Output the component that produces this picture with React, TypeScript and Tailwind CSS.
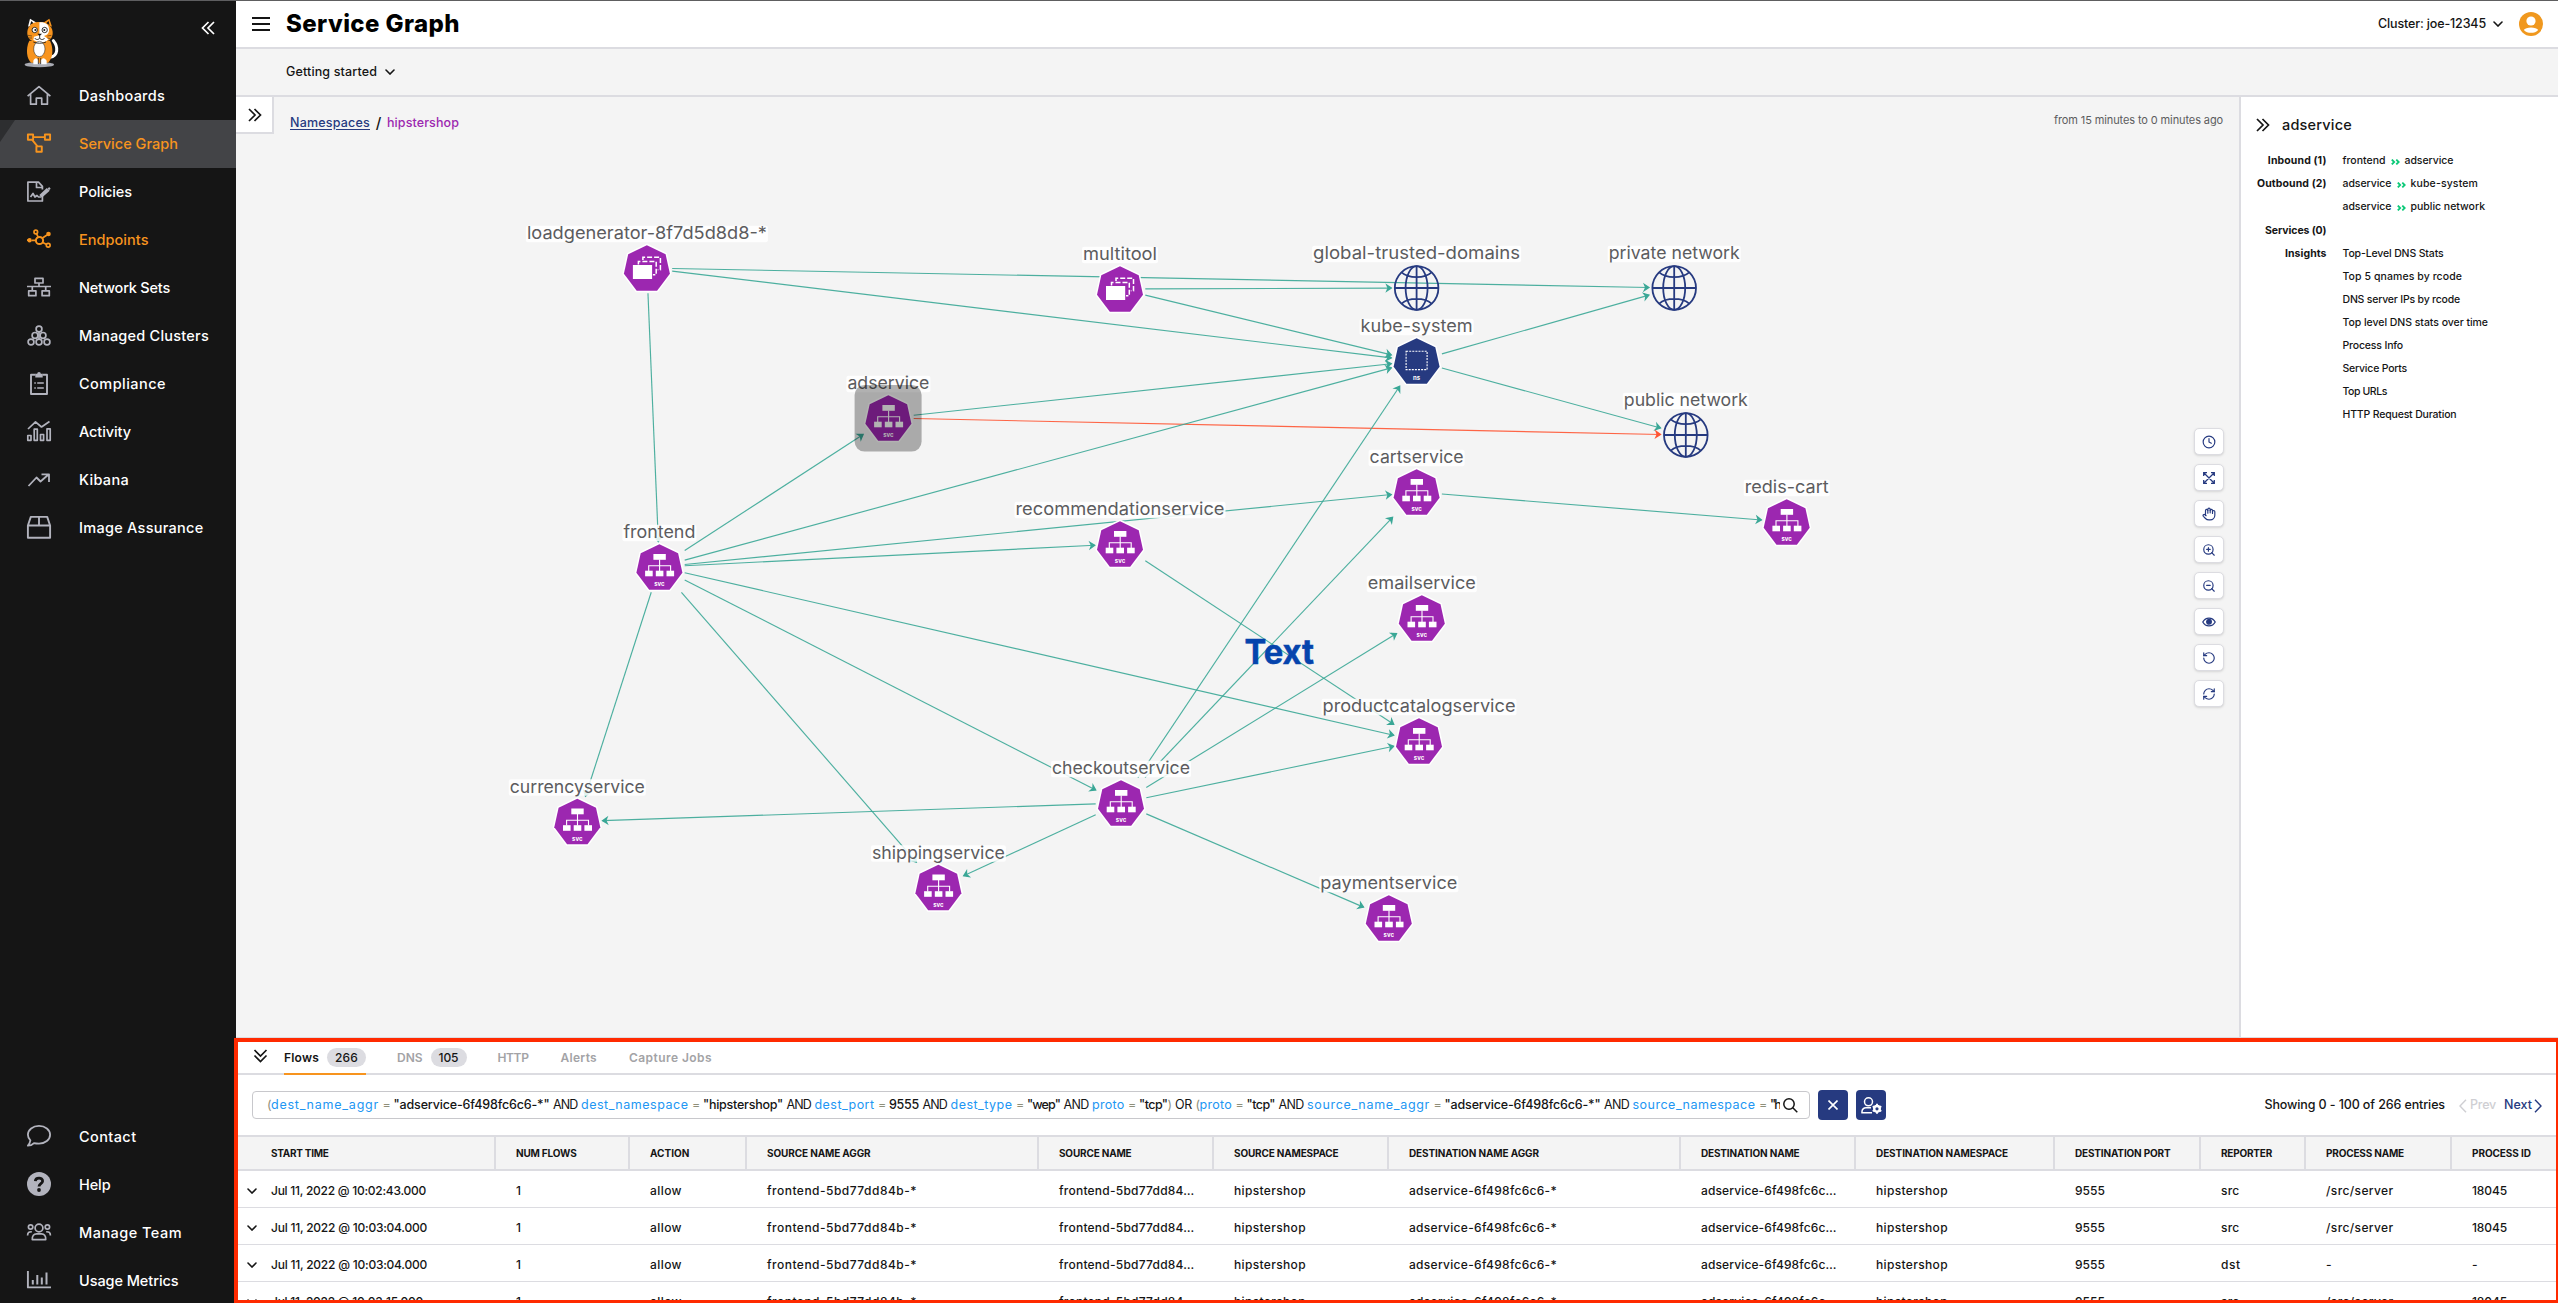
import { useLayoutEffect, useRef } from "react";
import type { ReactNode } from "react";
import {
  LuClock,
  LuHand,
  LuZoomIn,
  LuZoomOut,
  LuRotateCcw,
  LuRefreshCw,
} from "react-icons/lu";

/* Text that is tracked out (or in) so that it fills a given width. */
function Fit({ w, className = "", children }: { w: number; className?: string; children: string }) {
  const ref = useRef<HTMLSpanElement>(null);
  useLayoutEffect(() => {
    const el = ref.current;
    if (!el) return;
    el.style.letterSpacing = "0px";
    const natural = el.getBoundingClientRect().width;
    el.style.letterSpacing = `${(w - natural) / children.length}px`;
  }, [w, children]);
  return (
    <span ref={ref} className={`inline-block whitespace-pre ${className}`}>
      {children}
    </span>
  );
}

/* ---------- icons ---------- */

function Icon({ children, className = "" }: { children: ReactNode; className?: string }) {
  return (
    <svg
      viewBox="0 0 24 24"
      className={`h-6 w-6 shrink-0 overflow-visible ${className}`}
      fill="none"
      stroke="currentColor"
      strokeWidth="1.7"
      strokeLinejoin="round"
    >
      {children}
    </svg>
  );
}

function DoubleChevron({ className = "" }: { className?: string }) {
  return (
    <svg viewBox="0 0 14 14" className={`h-[14px] w-[14px] ${className}`} fill="none" stroke="currentColor" strokeWidth="1.7">
      <path d="M1 1L7 7L1 13M6.5 1L12.5 7L6.5 13" />
    </svg>
  );
}

function Chevron({ className = "" }: { className?: string }) {
  return (
    <svg viewBox="0 0 10 6" className={`h-[6px] w-[10px] ${className}`} fill="none" stroke="currentColor" strokeWidth="1.6" strokeLinecap="round">
      <path d="M1 1L5 5L9 1" />
    </svg>
  );
}

function CatLogo() {
  return (
    <svg viewBox="0 0 180 186" className="h-[62px] w-[60px]">
      <ellipse cx="64" cy="164" rx="44" ry="8" fill="#a9abb3" />
      <path d="M96 142C120 138 122 112 106 92" fill="none" stroke="#fff" strokeWidth="9" strokeLinecap="round" />
      <path d="M30 50L36 26L56 38Z" fill="#fff" />
      <path d="M76 38L94 26L102 50Z" fill="#f7941e" />
      <path d="M84 40L92 33L95 48Z" fill="#151515" />
      <path d="M36 45L40 33L48 41Z" fill="#151515" />
      <path d="M34 92C22 116 26 148 40 158H90C104 146 108 116 96 92Z" fill="#f7941e" />
      <path d="M64 36C40 34 26 52 28 72C30 90 46 98 66 98Z" fill="#f7941e" />
      <path d="M64 36C90 34 106 52 104 72C102 90 86 98 64 98Z" fill="#f7941e" />
      <path d="M64 37C80 35 92 42 93 56C94 70 88 74 78 78L92 88C84 97 74 98 64 98L46 90L48 80L64 76Z" fill="#fff" />
      <ellipse cx="64" cy="117" rx="17" ry="23" fill="#fff" stroke="#151515" strokeWidth="1.5" />
      <path d="M46 152C50 142 58 142 61 152L60 163H46ZM68 152C72 142 80 142 86 152L86 163H69Z" fill="#fff" />
      <path d="M61 144V162M68 144V162" stroke="#151515" strokeWidth="2" />
      <circle cx="50" cy="60" r="8" fill="#fff" stroke="#151515" strokeWidth="2.5" />
      <circle cx="80" cy="60" r="8" fill="#fff" stroke="#151515" strokeWidth="2.5" />
      <circle cx="52" cy="60" r="3" fill="#151515" />
      <circle cx="79" cy="60" r="3" fill="#151515" />
      <path d="M58 71H72L65 78Z" fill="#151515" />
      <path d="M65 76V84M50 84C54 90 62 90 65 84C68 90 76 90 80 84M46 96C56 101 74 101 84 96" fill="none" stroke="#151515" strokeWidth="2.5" />
      <path d="M30 76L42 78M32 84L42 84M88 78L100 76M88 84L98 86" stroke="#151515" strokeWidth="1.5" />
    </svg>
  );
}

const icons: Record<string, ReactNode> = {
  Dashboards: (
    <Icon>
      <path d="M0.6 12.2L12 2.6L23.4 12.2M3.6 10.2V20.2H9.3V14.2H14.7V20.2H20.4V10.2" />
    </Icon>
  ),
  "Service Graph": (
    <Icon className="text-[#f7941e]">
      <path d="M0.9 2.5H6.1V7.7H0.9ZM17.9 2.5H23.1V7.7H17.9ZM9.4 14.4H14.8V19.8H9.4ZM6.1 5.1H17.9M5 7.7L10.5 14.4" strokeWidth="1.9" />
    </Icon>
  ),
  Policies: (
    <Icon>
      <path d="M15.4 16V21H0.9V2.2H11.5L15.4 6.4V9.5M9.5 2.5V7.5H15M3.5 17L6 13.5L8 17L10 15.5L11.5 17H14" />
      <path d="M13 15.8L20.5 8.6M21.4 7.8L23 9.4M14.2 17L22 10" strokeWidth="2" />
    </Icon>
  ),
  Endpoints: (
    <Icon className="text-[#f7941e]">
      <circle cx="12.5" cy="12.5" r="3.6" strokeWidth="2" />
      <circle cx="8.8" cy="4" r="1.8" />
      <circle cx="21.2" cy="17.2" r="1.9" />
      <circle cx="2.6" cy="12.2" r="2.2" fill="currentColor" stroke="none" />
      <circle cx="21.5" cy="6" r="2.3" fill="currentColor" stroke="none" />
      <path d="M9.5 5.6L11.2 9.2M5 12.3H9M15.5 10L20 7M15.8 14.5L19.6 16.5M2 12.2H0" />
    </Icon>
  ),
  "Network Sets": (
    <Icon>
      <path d="M8 2.4H16V7H8ZM12 7V10.5M0 10.5H24M5.3 10.5V14.8M18.7 10.5V14.8M1.7 14.8H8.9V19.7H1.7ZM15.1 14.8H22.3V19.7H15.1Z" />
    </Icon>
  ),
  "Managed Clusters": (
    <Icon>
      <circle cx="12" cy="5" r="2.9" />
      <circle cx="8" cy="11.4" r="2.9" />
      <circle cx="16" cy="11.4" r="2.9" />
      <circle cx="4" cy="18" r="2.9" />
      <circle cx="12" cy="18" r="2.9" />
      <circle cx="20" cy="18" r="2.9" />
      <path d="M12 8V15" />
    </Icon>
  ),
  Compliance: (
    <Icon>
      <path d="M8.5 2.8H4V22H20V2.8H15.5" strokeWidth="1.9" />
      <path d="M8.3 1.8H10.2A1.8 1.8 0 0 1 13.8 1.8H15.7V5.6H8.3Z" fill="currentColor" stroke="none" />
      <path d="M7.3 11H8.8M10.2 11H16.8M7.3 16H8.8M10.2 16H16.8" strokeWidth="1.4" />
    </Icon>
  ),
  Activity: (
    <Icon>
      <path d="M1 9L8.5 1.8L14.5 7L22.5 1.5M0.8 15.5H4V20.3H0.8ZM7.2 9.2H10.3V20.3H7.2ZM13.5 14.5H16.6V20.3H13.5ZM20 8.8H23.2V20.3H20Z" />
    </Icon>
  ),
  Kibana: (
    <Icon>
      <path d="M1.5 18L9.5 9.5L13.5 13.5L21.5 6.5M14.5 6.3H22V14" strokeWidth="1.8" />
    </Icon>
  ),
  "Image Assurance": (
    <Icon>
      <path d="M0.9 9.5L3.8 0.9H20.2L23.1 9.5V21.8H0.9ZM0.9 9.5H23.1M12 0.9V9.5" strokeWidth="1.9" />
    </Icon>
  ),
  Contact: (
    <Icon>
      <path d="M12 0.9C5.8 0.9 0.9 4.8 0.9 9.7C0.9 11.9 1.9 13.9 3.4 15.4C3.1 17.3 2.2 19.2 0.9 20.7C3.2 20.7 5.4 19.8 7 18.1C8.6 18.5 10.2 18.6 12 18.6C18.2 18.6 23.1 14.6 23.1 9.7C23.1 4.8 18.2 0.9 12 0.9Z" strokeWidth="1.8" />
    </Icon>
  ),
  Help: (
    <Icon>
      <circle cx="12" cy="11" r="12" fill="currentColor" stroke="none" />
      <path d="M8.3 8.2C8.6 3.9 15.8 4.2 15.6 8.2C15.5 10.6 12 10.7 12 13.4" stroke="#151515" strokeWidth="2.8" />
      <circle cx="12" cy="17" r="1.9" fill="#151515" stroke="none" />
    </Icon>
  ),
  "Manage Team": (
    <Icon>
      <circle cx="12" cy="7" r="3.9" />
      <circle cx="3.6" cy="6" r="2.2" />
      <circle cx="20.4" cy="6" r="2.2" />
      <path d="M5.3 18.7C5 14.5 7 12.8 9.5 12.8H14.5C17 12.8 19 14.5 18.7 18.7ZM0.6 14.5C0.6 11.5 2 10.6 4.8 10.8M23.4 14.5C23.4 11.5 22 10.6 19.2 10.8" />
    </Icon>
  ),
  "Usage Metrics": (
    <Icon>
      <path d="M0.9 2V18.4H24" strokeWidth="1.9" />
      <path d="M5.8 11V15.5M10.3 6V15.5M14.8 8.5V15.5M19.5 3.5V15.5" strokeWidth="2" />
    </Icon>
  ),
};

/* ---------- sidebar ---------- */

const mainNav: [string, number][] = [
  ["Dashboards", 86],
  ["Service Graph", 99],
  ["Policies", 53],
  ["Endpoints", 69.5],
  ["Network Sets", 91],
  ["Managed Clusters", 130],
  ["Compliance", 87],
  ["Activity", 52],
  ["Kibana", 50],
  ["Image Assurance", 124.5],
];

const footNav: [string, number][] = [
  ["Contact", 57.5],
  ["Help", 31.5],
  ["Manage Team", 103],
  ["Usage Metrics", 99.5],
];

function NavItem({ label, w }: { label: string; w: number }) {
  const active = label === "Service Graph";
  const orange = active || label === "Endpoints";
  return (
    <div className={`relative flex h-12 shrink-0 items-center pl-[27px] ${active ? "bg-[#434447]" : ""}`}>
      {active && (
        <svg viewBox="0 0 15 22" className="absolute left-0 top-0 h-[22px] w-[15px]">
          <path d="M0 0H15L0 22Z" fill="#2d2e30" />
        </svg>
      )}
      <span className="flex text-[#b2b3bd]">{icons[label]}</span>
      <Fit w={w} className={`ml-7 text-[14.5px] font-medium ${orange ? "text-[#f7941e]" : "text-white"}`}>
        {label}
      </Fit>
    </div>
  );
}

function Sidebar() {
  return (
    <nav className="flex w-[236px] shrink-0 flex-col bg-[#151515]">
      <div className="flex h-[71px] shrink-0 items-start justify-between pl-[18px] pr-[21px] pt-[9px]">
        <CatLogo />
        <DoubleChevron className="mt-[11px] rotate-180 text-white" />
      </div>
      {mainNav.map(([l, w]) => (
        <NavItem key={l} label={l} w={w} />
      ))}
      <div className="h-[561px] shrink-0" />
      {footNav.map(([l, w]) => (
        <NavItem key={l} label={l} w={w} />
      ))}
    </nav>
  );
}

/* ---------- graph ---------- */

type Kind = "svc" | "pods" | "globe" | "ns";

const nodes: Record<string, { x: number; y: number; kind: Kind; label: string; w: number }> = {
  load: { x: 646.9, y: 268, kind: "pods", label: "loadgenerator-8f7d5d8d8-*", w: 240 },
  multi: { x: 1120, y: 289, kind: "pods", label: "multitool", w: 74 },
  global: { x: 1416.6, y: 288, kind: "globe", label: "global-trusted-domains", w: 207 },
  priv: { x: 1674.2, y: 288, kind: "globe", label: "private network", w: 131 },
  kube: { x: 1416.6, y: 361, kind: "ns", label: "kube-system", w: 112 },
  pub: { x: 1685.8, y: 435, kind: "globe", label: "public network", w: 124 },
  ad: { x: 888.4, y: 418, kind: "svc", label: "adservice", w: 82 },
  cart: { x: 1416.6, y: 492, kind: "svc", label: "cartservice", w: 94 },
  redis: { x: 1786.7, y: 522, kind: "svc", label: "redis-cart", w: 84 },
  reco: { x: 1120, y: 544, kind: "svc", label: "recommendationservice", w: 209 },
  front: { x: 659.4, y: 567, kind: "svc", label: "frontend", w: 72 },
  email: { x: 1421.8, y: 618, kind: "svc", label: "emailservice", w: 108 },
  product: { x: 1419, y: 741, kind: "svc", label: "productcatalogservice", w: 193 },
  checkout: { x: 1121, y: 803, kind: "svc", label: "checkoutservice", w: 138 },
  currency: { x: 577.3, y: 821.5, kind: "svc", label: "currencyservice", w: 135 },
  shipping: { x: 938.4, y: 887.5, kind: "svc", label: "shippingservice", w: 133 },
  payment: { x: 1388.8, y: 918, kind: "svc", label: "paymentservice", w: 137 },
};

const edges: [string, string][] = [
  ["load", "priv"], ["load", "kube"], ["load", "front"],
  ["multi", "global"], ["multi", "kube"],
  ["kube", "priv"], ["kube", "pub"],
  ["ad", "kube"], ["ad", "pub"],
  ["front", "ad"], ["front", "kube"], ["front", "cart"], ["front", "reco"],
  ["front", "product"], ["front", "checkout"], ["front", "shipping"], ["front", "currency"],
  ["reco", "product"], ["cart", "redis"],
  ["checkout", "kube"], ["checkout", "cart"], ["checkout", "email"], ["checkout", "product"],
  ["checkout", "payment"], ["checkout", "shipping"], ["checkout", "currency"],
];

function Edge({ from, to }: { from: string; to: string }) {
  const a = nodes[from];
  const b = nodes[to];
  const dx = b.x - a.x;
  const dy = b.y - a.y;
  const k = 25.3 / Math.max(Math.abs(dx), Math.abs(dy));
  const ex = b.x - dx * k;
  const ey = b.y - dy * k;
  const angle = (Math.atan2(dy, dx) * 180) / Math.PI;
  const color = from === "ad" && to === "pub" ? "#ff5533" : "#3aa796";
  return (
    <g stroke={color} fill="none">
      <line x1={a.x + dx * k} y1={a.y + dy * k} x2={ex} y2={ey} strokeWidth="1.15" strokeOpacity="0.9" />
      <path d="M-4.5 -3L0 0L-4.5 3L-3.2 0Z" transform={`translate(${ex} ${ey}) rotate(${angle})`} fill={color} strokeWidth="1.3" />
    </g>
  );
}

const heptagon = "0,-22.8 18.7,-13.7 23,5.7 10.2,22.7 -10.2,22.7 -23,5.7 -18.7,-13.7";

function Glyph({ kind }: { kind: Kind }) {
  if (kind === "globe") {
    return (
      <g fill="none" stroke="#263a80" strokeWidth="1.8">
        <circle r="21.8" />
        <ellipse rx="11" ry="21.8" />
        <path d="M-21.8 0H21.8M0 -21.8V21.8M-15 -15.6C-8 -9.3 8 -9.3 15 -15.6M-15 15.6C-8 9.3 8 9.3 15 15.6" />
      </g>
    );
  }
  return (
    <g>
      <polygon points={heptagon} fill={kind === "ns" ? "#263a80" : "#9c27b0"} stroke="#fff" strokeWidth="3" paintOrder="stroke" />
      {kind === "svc" && (
        <g fill="#fff">
          <rect x="-6" y="-13" width="12.4" height="5.8" />
          <path d="M0.2 -7.5V4M-10.7 4V-1.3H11.2V4" fill="none" stroke="#fff" strokeWidth="1.1" />
          <rect x="-14.3" y="3.7" width="7.6" height="5.6" />
          <rect x="-3.6" y="3.7" width="7.6" height="5.6" />
          <rect x="7.1" y="3.7" width="7.6" height="5.6" />
        </g>
      )}
      {kind === "pods" && (
        <g fill="none" stroke="#fff" strokeWidth="1.5">
          <rect x="-14" y="-3" width="19.2" height="14" fill="#fff" stroke="none" />
          <path d="M-8.5 -3.5V-6.5H9.3V6.8H6" strokeDasharray="5 2" />
          <path d="M-4 -8V-10.8H13.5V1.8H10.8" strokeDasharray="5 2" />
        </g>
      )}
      {kind === "ns" && (
        <rect x="-10.5" y="-9.8" width="21" height="18.4" fill="none" stroke="#fff" strokeWidth="1.1" strokeDasharray="2 1.1" />
      )}
      {kind !== "pods" && (
        <text y="19.2" textAnchor="middle" fill="#fff" className="text-[6px] font-bold">
          {kind === "ns" ? "ns" : "svc"}
        </text>
      )}
    </g>
  );
}

function Graph() {
  return (
    <svg viewBox="236 97 2003 939" className="absolute left-0 top-0 h-[939px] w-[2003px]">
      {edges.map(([a, b]) => (
        <Edge key={a + b} from={a} to={b} />
      ))}
      {Object.entries(nodes).map(([id, n]) => (
        <g key={id} transform={`translate(${n.x} ${n.y})`}>
          <rect x={-n.w / 2 - 1} y="-42.3" width={n.w + 2} height="16.6" rx="2" fill="#fff" fillOpacity="0.85" />
          <Glyph kind={n.kind} />
          <text
            x={-n.w / 2}
            y="-29"
            textLength={n.w}
            lengthAdjust="spacingAndGlyphs"
            fill="#5c5c5e"
            className="text-[17.5px]"
          >
            {n.label}
          </text>
        </g>
      ))}
      <rect x="854.6" y="385" width="67" height="66.6" rx="10" fill="#000" fillOpacity="0.3" />
      <text
        x="1244.5"
        y="663.6"
        textLength="69.5"
        lengthAdjust="spacingAndGlyphs"
        fill="#0544ad"
        stroke="#0544ad"
        strokeWidth="0.5"
        className="text-[34px] font-bold"
      >
        Text
      </text>
    </svg>
  );
}

const tools: ReactNode[] = [
  <LuClock className="h-[14px] w-[14px]" />,
  <svg viewBox="0 0 12 12" className="h-3 w-3" fill="none" stroke="currentColor" strokeWidth="1.3">
    <path d="M0.7 4V0.7H4M8 0.7H11.3V4M11.3 8V11.3H8M4 11.3H0.7V8M1 1L11 11M11 1L1 11" />
  </svg>,
  <LuHand className="h-[14px] w-[14px]" />,
  <LuZoomIn className="h-[14px] w-[14px]" />,
  <LuZoomOut className="h-[14px] w-[14px]" />,
  <svg viewBox="0 0 14 10" className="h-[10px] w-[14px]" fill="none" stroke="currentColor" strokeWidth="1.3">
    <path d="M0.8 5C3.5 -0.2 10.5 -0.2 13.2 5C10.5 10.2 3.5 10.2 0.8 5Z" />
    <circle cx="7" cy="4.8" r="2.3" fill="currentColor" />
  </svg>,
  <LuRotateCcw className="h-[14px] w-[14px]" />,
  <LuRefreshCw className="h-[14px] w-[14px]" />,
];

function Canvas() {
  return (
    <section className="relative flex w-[2003px] shrink-0 items-start justify-between">
      <Graph />
      <div className="relative flex items-start">
        <button className="flex h-[37px] w-[38px] items-center justify-center border-b-2 border-r-2 border-[#dcdce1] bg-white pl-[2px]">
          <DoubleChevron className="h-[12px] w-[13px]" />
        </button>
        <div className="flex h-[52px] items-center pl-[16px] text-[12.5px] font-medium">
          <Fit w={80} className="text-[#263a80] underline underline-offset-2">
            Namespaces
          </Fit>
          <span className="w-[17px] text-center text-[15px]">/</span>
          <Fit w={72} className="text-[#9c27b0]">
            hipstershop
          </Fit>
        </div>
      </div>
      <div className="relative flex w-[170px] flex-col items-end pr-[15px] pt-[15px]">
        <div className="flex h-[17px] items-center pr-px text-[11px] text-[#5c5c5e]">
          <Fit w={169}>from 15 minutes to 0 minutes ago</Fit>
        </div>
        <div className="mt-[299px] flex w-[30px] flex-col gap-[9px]">
          {tools.map((t, i) => (
            <button
              key={i}
              className="flex h-[27px] w-[30px] items-center justify-center rounded-[5px] border border-[#dcdce1] bg-white text-[#263a80] shadow-sm"
            >
              {t}
            </button>
          ))}
        </div>
      </div>
    </section>
  );
}

/* ---------- details panel ---------- */

function Flow({ from, to, fw, tw }: { from: string; to: string; fw: number; tw: number }) {
  return (
    <span className="flex items-center">
      <Fit w={fw}>{from}</Fit>
      <svg viewBox="0 0 9 6" className="mx-[5px] mt-[2px] h-[6px] w-[9px]" fill="none" stroke="#0bc978" strokeWidth="1.8">
        <path d="M0.8 0.6L3.2 3L0.8 5.4M5.3 0.6L7.7 3L5.3 5.4" />
      </svg>
      <Fit w={tw}>{to}</Fit>
    </span>
  );
}

function Plain({ w, children }: { w: number; children: string }) {
  return <Fit w={w}>{children}</Fit>;
}

const details: [string, number, ReactNode][] = [
  ["Inbound (1)", 58.5, <Flow from="frontend" to="adservice" fw={43} tw={49} />],
  ["Outbound (2)", 69.5, <Flow from="adservice" to="kube-system" fw={49} tw={67.5} />],
  ["", 0, <Flow from="adservice" to="public network" fw={49} tw={74.5} />],
  ["Services (0)", 61.5, null],
  ["Insights", 41.5, <Plain w={101}>Top-Level DNS Stats</Plain>],
  ["", 0, <Plain w={119.5}>Top 5 qnames by rcode</Plain>],
  ["", 0, <Plain w={117.5}>DNS server IPs by rcode</Plain>],
  ["", 0, <Plain w={145.5}>Top level DNS stats over time</Plain>],
  ["", 0, <Plain w={60.5}>Process Info</Plain>],
  ["", 0, <Plain w={64.5}>Service Ports</Plain>],
  ["", 0, <Plain w={44.5}>Top URLs</Plain>],
  ["", 0, <Plain w={114}>HTTP Request Duration</Plain>],
];

function Details() {
  return (
    <aside className="flex grow flex-col border-l-2 border-[#dcdce1] bg-white">
      <div className="flex h-[52px] items-center pl-[15px] pt-1">
        <DoubleChevron className="h-[13px] w-[13px]" />
        <Fit w={70} className="ml-3 text-[14.5px] font-medium">
          adservice
        </Fit>
      </div>
      <div className="flex flex-col text-[10.5px] font-medium">
        {details.map(([k, w, v], i) => (
          <div key={i} className={`flex items-center ${i === 2 ? "h-[24px]" : "h-[23px]"}`}>
            <div className="flex w-[85.5px] justify-end font-bold">{k && <Fit w={w}>{k}</Fit>}</div>
            <div className="ml-[16px] flex">{v}</div>
          </div>
        ))}
      </div>
    </aside>
  );
}

/* ---------- flow logs ---------- */

type Tok = [string, number, "f" | "v" | "k" | "o"];
const query: Tok[][] = [
  [["(", 4, "o"], ["dest_name_aggr", 108, "f"]],
  [["=", 7.5, "o"]], [['"adservice-6f498fc6c6-*"', 156, "v"]], [["AND", 24.5, "k"]],
  [["dest_namespace", 107.5, "f"]], [["=", 7.5, "o"]], [['"hipstershop"', 80, "v"]], [["AND", 24.5, "k"]],
  [["dest_port", 60, "f"]], [["=", 7.5, "o"]], [["9555", 30, "v"]], [["AND", 24.5, "k"]],
  [["dest_type", 62, "f"]], [["=", 7.5, "o"]], [['"wep"', 33, "v"]], [["AND", 25, "k"]],
  [["proto", 32.5, "f"]], [["=", 7.5, "o"]], [['"tcp"', 28.5, "v"], [")", 4, "o"]], [["OR", 17, "k"]],
  [["(", 4, "o"], ["proto", 32.5, "f"]], [["=", 7.5, "o"]], [['"tcp"', 28.5, "v"]], [["AND", 25, "k"]],
  [["source_name_aggr", 123, "f"]], [["=", 7.5, "o"]], [['"adservice-6f498fc6c6-*"', 156, "v"]], [["AND", 25, "k"]],
  [["source_namespace", 123, "f"]], [["=", 7.5, "o"]], [['"h', 10, "v"]],
];

const tokenClass = {
  f: "text-[#2196f3]",
  v: "font-medium text-[#151515]",
  k: "text-[#151515]",
  o: "text-[#8f8f7a]",
};

const columns: { title: string; tw: number; w: string }[] = [
  { title: "START TIME", tw: 57.5, w: "w-[258px] pl-[33px]" },
  { title: "NUM FLOWS", tw: 60.5, w: "w-[134px] pl-5" },
  { title: "ACTION", tw: 39.5, w: "w-[117px] pl-5" },
  { title: "SOURCE NAME AGGR", tw: 103.5, w: "w-[292px] pl-5" },
  { title: "SOURCE NAME", tw: 72.5, w: "w-[175px] pl-5" },
  { title: "SOURCE NAMESPACE", tw: 104.5, w: "w-[175px] pl-5" },
  { title: "DESTINATION NAME AGGR", tw: 130, w: "w-[292px] pl-5" },
  { title: "DESTINATION NAME", tw: 98.5, w: "w-[175px] pl-5" },
  { title: "DESTINATION NAMESPACE", tw: 132, w: "w-[199px] pl-5" },
  { title: "DESTINATION PORT", tw: 95.5, w: "w-[146px] pl-5" },
  { title: "REPORTER", tw: 51, w: "w-[105px] pl-5" },
  { title: "PROCESS NAME", tw: 78, w: "w-[146px] pl-5" },
  { title: "PROCESS ID", tw: 59, w: "w-[106px] pl-5" },
];

const base: [string, number][] = [
  ["1", 5], ["allow", 32], ["frontend-5bd77dd84b-*", 150], ["frontend-5bd77dd84…", 135.5],
  ["hipstershop", 72], ["adservice-6f498fc6c6-*", 148], ["adservice-6f498fc6c…", 135.5],
  ["hipstershop", 72], ["9555", 30],
];
const src: [string, number][] = [["src", 18.5], ["/src/server", 67.5], ["18045", 35]];
const dst: [string, number][] = [["dst", 19.5], ["-", 7], ["-", 7]];

const rows: [string, number][][] = [
  [["Jul 11, 2022 @ 10:02:43.000", 155], ...base, ...src],
  [["Jul 11, 2022 @ 10:03:04.000", 156], ...base, ...src],
  [["Jul 11, 2022 @ 10:03:04.000", 156], ...base, ...dst],
  [["Jul 11, 2022 @ 10:03:15.000", 152], ...base, ...src],
];

function Tab({ label, w, count, cw = 0, active = false }: { label: string; w: number; count?: string; cw?: number; active?: boolean }) {
  return (
    <div className={`-mb-[2px] flex items-center border-b-2 font-semibold ${active ? "border-[#f7941e] text-[#151515]" : "border-transparent text-[#a3a3a6]"}`}>
      <Fit w={w}>{label}</Fit>
      {count && (
        <span className="ml-2 flex h-[19px] items-center rounded-full bg-[#dcdce1] px-[8px] font-medium text-[#151515]">
          <Fit w={cw}>{count}</Fit>
        </span>
      )}
    </div>
  );
}

function FlowLogs() {
  return (
    <section className="relative z-10 -ml-[2px] flex h-[265px] flex-col overflow-hidden border-b-[3px] border-l-4 border-r-2 border-t-4 border-[#ff2a00] bg-white">
      <div className="flex h-[33px] shrink-0 items-stretch border-b-2 border-[#dcdce1] pl-[15px] text-[12px]">
        <DoubleChevron className="mr-4 mt-[7px] w-[15px] rotate-90" />
        <Tab label="Flows" w={35} count="266" cw={23} active />
        <div className="w-[31px]" />
        <Tab label="DNS" w={25.5} count="105" cw={20} />
        <div className="w-[31px]" />
        <Tab label="HTTP" w={31} />
        <div className="w-[32px]" />
        <Tab label="Alerts" w={36.5} />
        <div className="w-[32px]" />
        <Tab label="Capture Jobs" w={83} />
      </div>
      <div className="flex h-[60px] shrink-0 items-center pl-[14px] pr-[14px]">
        <div className="flex h-[28px] w-[1558px] items-center rounded-[4px] border border-[#c8c8cc] pl-[14px] text-[12.5px]">
          <div className="flex w-[1513px] gap-[3.5px] overflow-hidden">
            {query.map((group, i) => (
              <span key={i} className="flex shrink-0">
                {group.map(([t, w, c], j) => (
                  <Fit key={j} w={w} className={tokenClass[c]}>
                    {t}
                  </Fit>
                ))}
              </span>
            ))}
          </div>
          <svg viewBox="0 0 15 15" className="ml-[3px] h-[15px] w-[15px] shrink-0" fill="none" stroke="#151515" strokeWidth="1.5">
            <circle cx="6" cy="6" r="5.2" />
            <path d="M9.8 9.8L14.3 14.3" />
          </svg>
        </div>
        <button className="ml-2 flex h-[30px] w-[30px] items-center justify-center rounded-[4px] bg-[#263a80] text-white">
          <svg viewBox="0 0 10 10" className="h-[10px] w-[10px]" fill="none" stroke="currentColor" strokeWidth="1.6">
            <path d="M0.5 0.5L9.5 9.5M9.5 0.5L0.5 9.5" />
          </svg>
        </button>
        <button className="ml-2 flex h-[30px] w-[30px] items-center justify-center rounded-[4px] bg-[#263a80] text-white">
          <svg viewBox="0 0 21 17" className="h-[17px] w-[21px]" fill="none" stroke="currentColor" strokeWidth="1.5">
            <circle cx="7.5" cy="4.8" r="4" />
            <path d="M11 15.8H1C0.6 12 3 10.8 5 10.8H10" />
            <circle cx="16" cy="11.8" r="2.8" strokeWidth="2.4" />
            <path d="M16 6.8V16.8M11.7 9.3L20.3 14.3M11.7 14.3L20.3 9.3" strokeWidth="1.9" strokeDasharray="2 6 2" />
          </svg>
        </button>
        <div className="ml-auto flex items-center text-[12.5px] font-medium">
          <Fit w={180.5}>Showing 0 - 100 of 266 entries</Fit>
          <svg viewBox="0 0 8 14" className="ml-[14px] mr-[3px] mt-px h-[14px] w-[8px]" fill="none" stroke="#cfcfd3" strokeWidth="1.4">
            <path d="M7 0.7L1 7L7 13.3" />
          </svg>
          <Fit w={26} className="text-[#cfcfd3]">
            Prev
          </Fit>
          <Fit w={28} className="ml-[8px] text-[#263a80]">
            Next
          </Fit>
          <svg viewBox="0 0 8 14" className="ml-[2px] mt-px h-[14px] w-[8px]" fill="none" stroke="#263a80" strokeWidth="1.4">
            <path d="M1 0.7L7 7L1 13.3" />
          </svg>
        </div>
      </div>
      <div className="flex h-[36px] w-[2320px] shrink-0 border-y-2 border-[#dcdce1] bg-[#f4f4f4] text-[10px] font-bold">
        {columns.map((c, i) => (
          <div key={c.title} className={`flex shrink-0 items-center ${c.w} ${i < 12 ? "border-r-2 border-[#dcdce1]" : ""}`}>
            <Fit w={c.tw}>{c.title}</Fit>
          </div>
        ))}
      </div>
      {rows.map((row, r) => (
        <div key={r} className="flex h-[37px] w-[2320px] shrink-0 items-center border-b border-[#dcdce1] pt-[3px] text-[12px] font-medium">
          {row.map(([t, w], i) => (
            <div key={i} className={`flex shrink-0 items-center ${columns[i].w}`}>
              {i === 0 && <Chevron className="-ml-[24px] mr-[14px]" />}
              <Fit w={w}>{t}</Fit>
            </div>
          ))}
        </div>
      ))}
    </section>
  );
}

/* ---------- page ---------- */

export default function App() {
  return (
    <div className="flex h-[1303px] w-[2558px] overflow-hidden border-t border-[#5e5e60] bg-[#f4f4f4] font-['Inter','Noto_Sans',sans-serif] text-[#151515]">
      <Sidebar />
      <main className="flex w-[2322px] shrink-0 flex-col">
        <header className="flex h-[48px] shrink-0 items-center justify-between border-b-2 border-[#dcdce1] bg-white pl-4 pr-[15px]">
          <div className="flex items-center">
            <svg viewBox="0 0 18 16" className="h-4 w-[18px]" stroke="#151515" strokeWidth="2">
              <path d="M0 2H18M0 8H18M0 14H18" />
            </svg>
            <h1 className="ml-4 flex text-[24px] font-extrabold text-black">
              <Fit w={174}>Service Graph</Fit>
            </h1>
          </div>
          <div className="flex items-center text-[12.5px] font-medium">
            <Fit w={108}>Cluster: joe-12345</Fit>
            <Chevron className="ml-[7px] mr-[16px]" />
            <svg viewBox="0 0 24 24" className="h-6 w-6">
              <circle cx="12" cy="12" r="12" fill="#f0981e" />
              <circle cx="12" cy="9" r="4.6" fill="#fff" />
              <path d="M4.8 18C6.5 14.5 17.5 14.5 19.2 18C16 21.8 8 21.8 4.8 18Z" fill="#fff" />
            </svg>
          </div>
        </header>
        <div className="flex h-[48px] shrink-0 items-center border-b-2 border-[#dcdce1] pl-[50px] text-[12.5px] font-medium">
          <Fit w={91}>Getting started</Fit>
          <Chevron className="ml-[8px]" />
        </div>
        <div className="flex h-[941px] shrink-0 border-b border-[#dcdce1]">
          <Canvas />
          <Details />
        </div>
        <FlowLogs />
      </main>
    </div>
  );
}
